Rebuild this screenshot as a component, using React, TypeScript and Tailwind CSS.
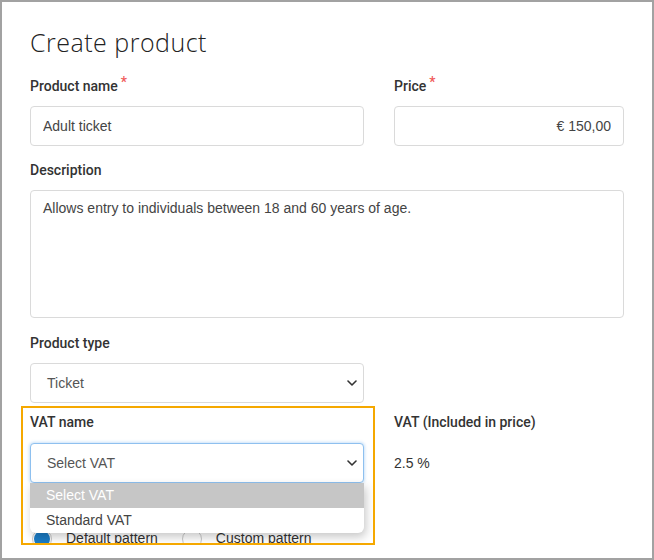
import React from "react";

const labelCls =
  "block h-5 leading-5 text-[14px] font-medium text-[#333] font-['Roboto','Liberation_Sans',sans-serif]";
const fieldCls =
  "block w-full h-10 px-3 border border-[#dadada] rounded-[4px] bg-white text-[14px] text-[#444] font-['Liberation_Sans',Arial,sans-serif] outline-none";

function Star() {
  return <span className="ml-[3px] align-top relative -top-[4px] text-[#f05a5a] text-[14px]">*</span>;
}

function Chevron() {
  return (
    <svg
      className="absolute right-[7px] top-1/2 -translate-y-1/2 pointer-events-none"
      width="10"
      height="6"
      viewBox="0 0 10 6"
      fill="none"
    >
      <path d="M1 1l4 4 4-4" stroke="#333" strokeWidth="1.6" strokeLinecap="round" strokeLinejoin="round" />
    </svg>
  );
}

function Radio({ checked, label }: { checked?: boolean; label: string }) {
  return (
    <div className="flex items-center gap-[14px]">
      <span className="w-[20px] h-[20px] rounded-full border border-[#c8c8c8] flex items-center justify-center bg-white">
        {checked && <span className="w-[16px] h-[16px] rounded-full bg-[#1b7cc6]" />}
      </span>
      <span className="text-[14px] text-[#333] font-['Liberation_Sans',Arial,sans-serif]">{label}</span>
    </div>
  );
}

export default function App() {
  return (
    <div className="w-[654px] h-[560px] bg-white border-2 border-[#a2a2a2] relative overflow-hidden">
      <div className="h-[543px] overflow-hidden pl-[28px] pt-[25px]">
        <h1 className="text-[25px] leading-[30px] font-light tracking-[0.5px] text-[#222] font-['Open_Sans',sans-serif]">
          Create product
        </h1>

        <div className="flex gap-[30px] mt-[19px]">
          <div className="w-[334px]">
            <label className={labelCls}>
              Product name
              <Star />
            </label>
            <input className={fieldCls + " mt-[10px]"} defaultValue="Adult ticket" />
          </div>
          <div className="w-[230px]">
            <label className={labelCls}>
              Price
              <Star />
            </label>
            <input className={fieldCls + " mt-[10px] text-right"} defaultValue="€ 150,00" />
          </div>
        </div>

        <div className="w-[594px] mt-[14px]">
          <label className={labelCls}>Description</label>
          <textarea
            className={fieldCls + " mt-[10px] h-[128px] py-[8px] resize-none leading-[18px]"}
            defaultValue="Allows entry to individuals between 18 and 60 years of age."
          />
        </div>

        <div className="w-[334px] mt-[15px]">
          <label className={labelCls}>Product type</label>
          <div className="relative mt-[10px]">
            <div className={fieldCls + " flex items-center pl-[16px] text-[#555]"}>Ticket</div>
            <Chevron />
          </div>
        </div>

        <div className="flex gap-[30px] mt-[9px]">
          <div className="w-[334px]">
            <label className={labelCls}>VAT name</label>
            <div className="relative mt-[11px]">
              <div
                className={
                  fieldCls +
                  " flex items-center pl-[16px] text-[#555] !border-[#8ec0ef] shadow-[0_0_3px_1px_rgba(140,190,240,0.45)]"
                }
              >
                Select VAT
              </div>
              <Chevron />
              <div className="absolute left-0 top-full w-full z-10 bg-white rounded-b-[6px] overflow-hidden shadow-[2px_4px_10px_rgba(0,0,0,0.22)] text-[14px] font-['Liberation_Sans',Arial,sans-serif]">
                <div className="h-[25px] leading-[25px] pl-[16px] bg-[#c6c6c6] text-white">Select VAT</div>
                <div className="h-[25px] leading-[25px] pl-[16px] text-[#444]">Standard VAT</div>
              </div>
            </div>
            <div className="flex gap-[24px] mt-[45px] pl-[2px]">
              <Radio checked label="Default pattern" />
              <Radio label="Custom pattern" />
            </div>
          </div>
          <div className="w-[230px]">
            <label className={labelCls}>VAT (Included in price)</label>
            <div className="mt-[11px] h-10 flex items-center text-[14px] text-[#333] font-['Liberation_Sans',Arial,sans-serif]">
              2.5 %
            </div>
          </div>
        </div>
      </div>

      <div className="absolute left-[19px] top-[404px] w-[354px] h-[139px] border-2 border-[#f5a800] pointer-events-none z-20" />
    </div>
  );
}
